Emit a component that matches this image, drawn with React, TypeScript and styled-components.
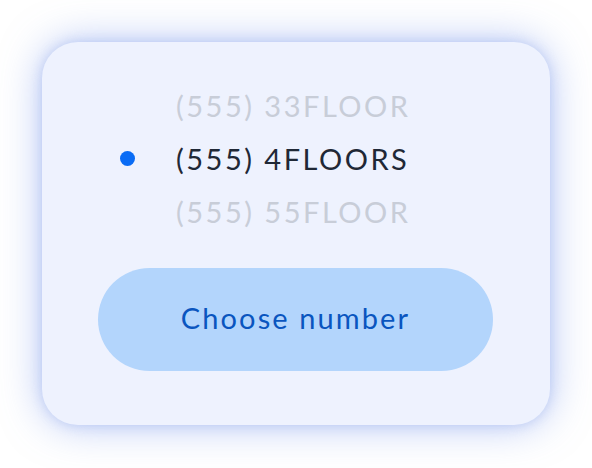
import React from 'react';
import styled, { createGlobalStyle } from 'styled-components';

const GlobalStyle = createGlobalStyle`
    html, body {
        margin: 0;
        padding: 0;
        background: #ffffff;
    }
    body {
        font-family: Lato, "Open Sans", sans-serif;
    }
`;

const numbers = [
    { label: '(555) 33FLOOR', active: false },
    { label: '(555) 4FLOORS', active: true },
    { label: '(555) 55FLOOR', active: false },
];

const App: React.FC = () => {
    return (
        <Page>
            <GlobalStyle />
            <Card>
                <List>
                    {numbers.map((n) => (
                        <Row key={n.label}>
                            <Dot active={n.active} />
                            <Label active={n.active}>{n.label}</Label>
                        </Row>
                    ))}
                </List>
                <ChooseButton>Choose number</ChooseButton>
            </Card>
        </Page>
    );
};

export default App;

const Page = styled.div`
    width: 592px;
    height: 468px;
    box-sizing: border-box;
    padding: 42px 42px 0 42px;
`;

const Card = styled.div`
    width: 508px;
    height: 383px;
    box-sizing: border-box;
    padding: 37px 57px 0 56px;
    border-radius: 36px;
    background: #eef2fe;
    box-shadow: 0 0 40px rgba(105, 140, 235, 0.5), 0 0 12px rgba(120, 150, 230, 0.3);
    display: flex;
    flex-direction: column;
`;

const List = styled.div`
    display: flex;
    flex-direction: column;
`;

const Row = styled.div`
    height: 53px;
    display: flex;
    align-items: center;
    padding-left: 22px;
    gap: 41px;
`;

const Dot = styled.span<{ active: boolean }>`
    width: 15px;
    height: 15px;
    border-radius: 50%;
    flex: none;
    background: ${({ active }) => (active ? '#0a6cf5' : 'transparent')};
`;

const Label = styled.span<{ active: boolean }>`
    font-size: 29px;
    letter-spacing: 2.5px;
    color: ${({ active }) => (active ? '#1f2836' : '#c8cdd8')};
`;

const ChooseButton = styled.button`
    margin-top: 30px;
    height: 103px;
    width: 395px;
    border: none;
    border-radius: 52px;
    background: #b3d5fc;
    color: #0a55bf;
    font-family: Lato, "Open Sans", sans-serif;
    font-size: 29px;
    letter-spacing: 2.1px;
    padding: 0 0 4px 0;
    cursor: pointer;
`;
